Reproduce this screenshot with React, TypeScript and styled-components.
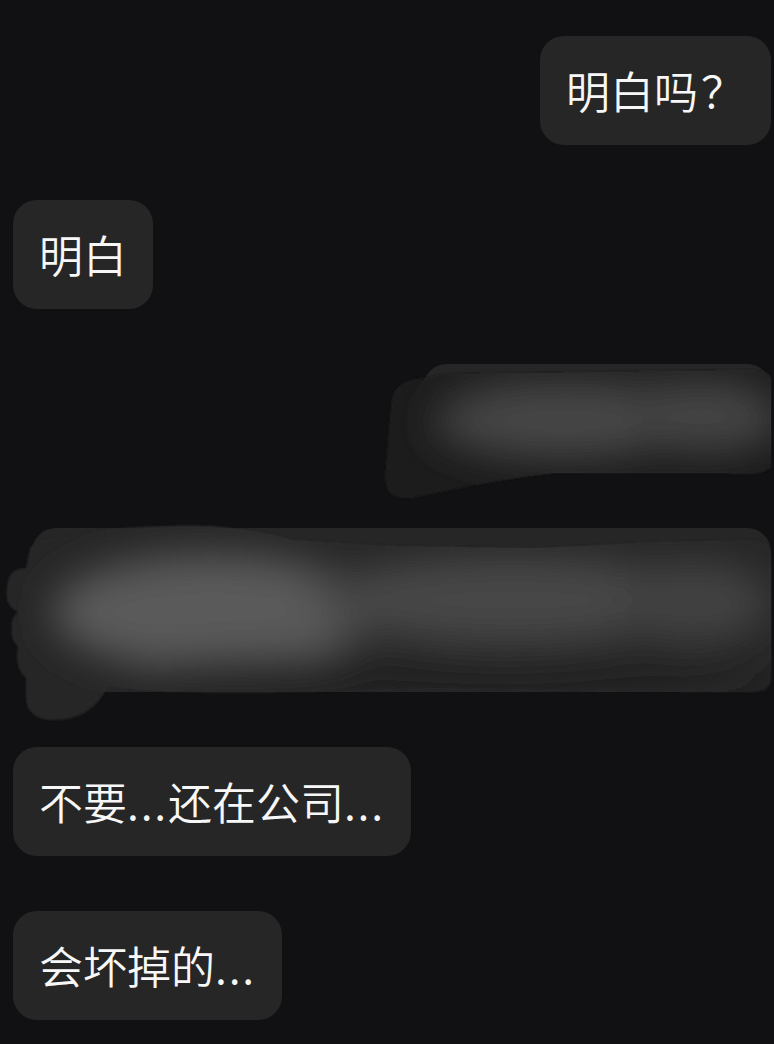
import React from 'react';
import styled, { createGlobalStyle } from 'styled-components';

const GlobalStyle = createGlobalStyle`
  html, body {
    margin: 0;
    padding: 0;
    background: #111113;
  }
  body {
    font-family: "Noto Sans CJK SC", "Noto Sans", sans-serif;
    -webkit-font-smoothing: antialiased;
  }
`;

const Chat = styled.div`
  width: 774px;
  min-height: 1044px;
  box-sizing: border-box;
  padding: 36px 3px 25px 13px;
  display: flex;
  flex-direction: column;
  gap: 55px;
  background: #111113;
  overflow: hidden;
`;

const Row = styled.div<{ $side: 'left' | 'right' }>`
  display: flex;
  justify-content: ${p => (p.$side === 'right' ? 'flex-end' : 'flex-start')};
`;

const Bubble = styled.div`
  background: #262626;
  color: #f7f7f7;
  border-radius: 24px;
  padding: 27px 26px;
  font-size: 44px;
  font-weight: 350;
  line-height: 55px;
  white-space: nowrap;
`;

const Dots = styled.span`
  letter-spacing: 1.8px;
`;

const Mark = styled.span`
  margin-left: 3px;
`;

const HiddenBubble = styled.div<{ $w: number; $h: number }>`
  position: relative;
  width: ${p => p.$w}px;
  height: ${p => p.$h}px;
  background: #262626;
  border-radius: 24px;
`;

const Smear = styled.svg`
  position: absolute;
  left: -60px;
  top: -40px;
  overflow: visible;
  pointer-events: none;
`;

type SmearProps = { w: number; h: number; children: React.ReactNode; id: string };

function Smudge({ w, h, children, id }: SmearProps) {
  const m = 60;
  const t = 40;
  return (
    <Smear
      width={w + m * 2}
      height={h + t * 2}
      viewBox={`${-m} ${-t} ${w + m * 2} ${h + t * 2}`}
      aria-hidden
    >
      <defs>
        <filter id={`${id}-soft`} x="-50%" y="-50%" width="200%" height="200%">
          <feGaussianBlur stdDeviation="20" />
        </filter>
        <filter id={`${id}-edge`} x="-20%" y="-20%" width="140%" height="140%">
          <feGaussianBlur stdDeviation="1.2" />
        </filter>
      </defs>
      {children}
    </Smear>
  );
}

function ShortSecret() {
  // smeared over message, 348 x 109
  const blob =
    'M 4 14 Q -30 14 -32 40 L -38 112 Q -38 138 -10 134 Q 70 116 132 109 L 300 109 Q 330 112 340 108 L 348 104 L 348 16 Q 348 6 330 6 L 20 10 Z';
  return (
    <HiddenBubble $w={348} $h={109}>
      <Smudge w={348} h={109} id="s1">
        <clipPath id="s1-clip">
          <path d={blob} />
        </clipPath>
        <g filter="url(#s1-edge)">
          <path fill="#1d1d1d" d={blob} />
        </g>
        <g clipPath="url(#s1-clip)">
          <g filter="url(#s1-soft)">
            <ellipse cx="140" cy="58" rx="130" ry="36" fill="#464646" />
            <ellipse cx="280" cy="54" rx="80" ry="34" fill="#444444" />
            <ellipse cx="180" cy="16" rx="160" ry="8" fill="#2a2a2a" />
          </g>
        </g>
      </Smudge>
    </HiddenBubble>
  );
}

function LongSecret() {
  // smeared over a two line message, 739 x 164
  const blob =
    'M 40 8 Q 90 -4 180 -2 Q 240 4 260 12 L 360 18 L 500 20 Q 560 18 620 14 L 730 12 Q 739 14 739 40 L 739 150 Q 739 164 720 164 L 400 160 L 250 164 Q 120 166 76 158 Q 60 192 22 192 Q -6 192 -6 168 L -6 150 Q -18 140 -14 118 Q -22 112 -20 100 Q -22 92 -14 84 Q -28 78 -25 60 Q -24 40 -6 40 L -2 20 Q 4 10 40 8 Z';
  return (
    <HiddenBubble $w={739} $h={164}>
      <Smudge w={739} h={164} id="s2">
        <clipPath id="s2-clip">
          <path d={blob} />
        </clipPath>
        <g filter="url(#s2-edge)">
          <path fill="#262626" d={blob} />
        </g>
        <g clipPath="url(#s2-clip)">
          <g filter="url(#s2-soft)">
            <ellipse cx="180" cy="84" rx="160" ry="58" fill="#5a5a5a" />
            <ellipse cx="480" cy="72" rx="200" ry="44" fill="#474747" />
            <ellipse cx="660" cy="74" rx="80" ry="40" fill="#424242" />
            <ellipse cx="420" cy="142" rx="320" ry="14" fill="#1f1f1f" />
          </g>
        </g>
      </Smudge>
    </HiddenBubble>
  );
}

export default function App() {
  return (
    <>
      <GlobalStyle />
      <Chat>
        <Row $side="right">
          <Bubble>
            明白吗<Mark>？</Mark>
          </Bubble>
        </Row>
        <Row $side="left">
          <Bubble>明白</Bubble>
        </Row>
        <Row $side="right">
          <ShortSecret />
        </Row>
        <Row $side="right">
          <LongSecret />
        </Row>
        <Row $side="left">
          <Bubble>
            不要<Dots>...</Dots>还在公司<Dots>...</Dots>
          </Bubble>
        </Row>
        <Row $side="left">
          <Bubble>
            会坏掉的<Dots>...</Dots>
          </Bubble>
        </Row>
      </Chat>
    </>
  );
}
